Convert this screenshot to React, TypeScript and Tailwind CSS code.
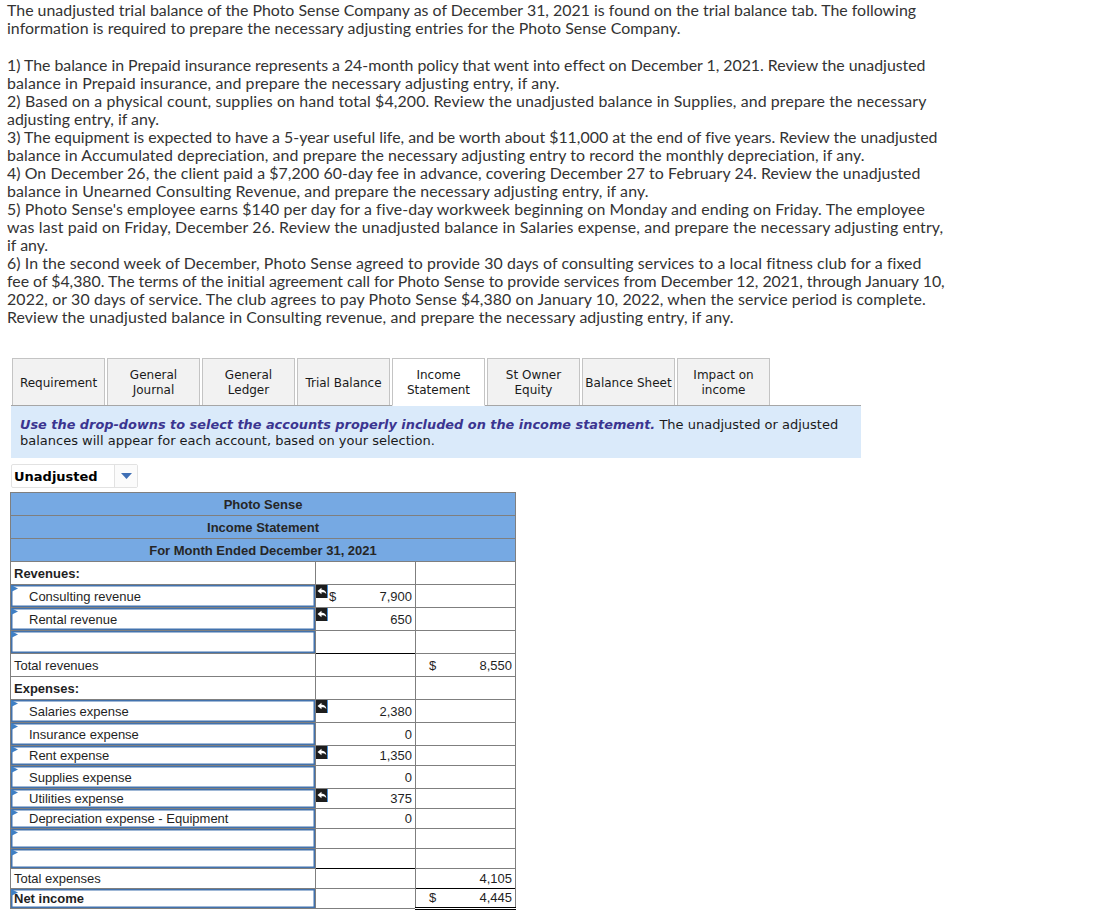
const lines: [string, string][] = [
  ["The unadjusted trial balance of the Photo Sense Company as of December 31, 2021 is found on the trial balance tab. The following", "tracking-[0.01px]"],
  ["information is required to prepare the necessary adjusting entries for the Photo Sense Company.", "tracking-[0.06px]"],
  ["", ""],
  ["1) The balance in Prepaid insurance represents a 24-month policy that went into effect on December 1, 2021. Review the unadjusted", "tracking-[-0.03px]"],
  ["balance in Prepaid insurance, and prepare the necessary adjusting entry, if any.", "tracking-[0.11px]"],
  ["2) Based on a physical count, supplies on hand total $4,200. Review the unadjusted balance in Supplies, and prepare the necessary", "tracking-[0.12px]"],
  ["adjusting entry, if any.", ""],
  ["3) The equipment is expected to have a 5-year useful life, and be worth about $11,000 at the end of five years. Review the unadjusted", ""],
  ["balance in Accumulated depreciation, and prepare the necessary adjusting entry to record the monthly depreciation, if any.", "tracking-[0.08px]"],
  ["4) On December 26, the client paid a $7,200 60-day fee in advance, covering December 27 to February 24. Review the unadjusted", "tracking-[0.065px]"],
  ["balance in Unearned Consulting Revenue, and prepare the necessary adjusting entry, if any.", "tracking-[0.11px]"],
  ["5) Photo Sense's employee earns $140 per day for a five-day workweek beginning on Monday and ending on Friday. The employee", "tracking-[0.1px]"],
  ["was last paid on Friday, December 26. Review the unadjusted balance in Salaries expense, and prepare the necessary adjusting entry,", "tracking-[0.13px]"],
  ["if any.", ""],
  ["6) In the second week of December, Photo Sense agreed to provide 30 days of consulting services to a local fitness club for a fixed", "tracking-[0.085px]"],
  ["fee of $4,380. The terms of the initial agreement call for Photo Sense to provide services from December 12, 2021, through January 10,", "tracking-[-0.02px]"],
  ["2022, or 30 days of service. The club agrees to pay Photo Sense $4,380 on January 10, 2022, when the service period is complete.", "tracking-[0.11px]"],
  ["Review the unadjusted balance in Consulting revenue, and prepare the necessary adjusting entry, if any.", "tracking-[0.09px]"],
];

const tabs: { label: string[]; active?: boolean }[] = [
  { label: ["Requirement"] },
  { label: ["General", "Journal"] },
  { label: ["General", "Ledger"] },
  { label: ["Trial Balance"] },
  { label: ["Income", "Statement"], active: true },
  { label: ["St Owner", "Equity"] },
  { label: ["Balance Sheet"] },
  { label: ["Impact on", "income"] },
];

type Row = {
  h: string;
  short?: boolean;
  label?: string;
  kind: "plain" | "bold" | "select" | "selectBold";
  arrow?: boolean;
  d1?: boolean;
  v1?: string;
  d2?: boolean;
  v2?: string;
  over1?: boolean;
  over2?: boolean;
  dbl2?: boolean;
};

const rows: Row[] = [
  { h: "h-[23px]", label: "Revenues:", kind: "bold" },
  { h: "h-[23px]", label: "Consulting revenue", kind: "select", arrow: true, d1: true, v1: "7,900" },
  { h: "h-[23px]", label: "Rental revenue", kind: "select", arrow: true, v1: "650" },
  { h: "h-[23px]", kind: "select" },
  { h: "h-[23px]", label: "Total revenues", kind: "plain", d2: true, v2: "8,550", over1: true },
  { h: "h-[23px]", label: "Expenses:", kind: "bold" },
  { h: "h-[23px]", label: "Salaries expense", kind: "select", arrow: true, v1: "2,380" },
  { h: "h-[23px]", label: "Insurance expense", kind: "select", v1: "0" },
  { h: "h-[20px]", short: true, label: "Rent expense", kind: "select", arrow: true, v1: "1,350" },
  { h: "h-[23px]", label: "Supplies expense", kind: "select", v1: "0" },
  { h: "h-[20px]", short: true, label: "Utilities expense", kind: "select", arrow: true, v1: "375" },
  { h: "h-[20px]", short: true, label: "Depreciation expense - Equipment", kind: "select", v1: "0" },
  { h: "h-[20px]", short: true, kind: "select" },
  { h: "h-[20px]", short: true, kind: "select" },
  { h: "h-[20px]", short: true, label: "Total expenses", kind: "plain", v2: "4,105", over1: true },
  { h: "h-[20px]", short: true, label: "Net income", kind: "selectBold", d2: true, v2: "4,445", dbl2: true, over2: true },
];

const blackTop = "before:absolute before:-top-px before:inset-x-0 before:h-px before:bg-black ";

function Flag() {
  return (
    <svg width="7" height="8" viewBox="0 0 7 8" className="absolute left-0 top-0">
      <path d="M0 0 L7 3.5 L0 7 Z" fill="#3f7fc4" />
    </svg>
  );
}

function BackArrow() {
  return (
    <span className="absolute left-0 top-0 flex h-[13px] w-[12px] items-center justify-center bg-[#1d1d1d] border-r border-[#4a90d9]">
      <svg width="10" height="9" viewBox="0 0 10 9">
        <path d="M0.5 4 L4.5 0.8 L4.5 2.8 C7 2.8 9 3.8 9.3 7 C8.3 5.6 6.8 5.2 4.5 5.2 L4.5 7.2 Z" fill="#fff" />
      </svg>
    </span>
  );
}

export default function App() {
  return (
    <div className="relative w-[1099px] h-[915px] overflow-hidden bg-white text-[#1a1a1a]">
      <div className="pl-[7px] pt-px font-['Lato',sans-serif] text-[15.9px] leading-[18px] text-[#333333] [font-variant-ligatures:none]">
        {lines.map(([l, track], i) => (
          <div key={i} className={(l ? "h-[18px] " : "h-[19px] ") + "whitespace-nowrap " + track}>
            {l}
          </div>
        ))}
      </div>

      <div className="ml-[11px] mt-[32px] w-[850px] font-['DejaVu_Sans',sans-serif] text-[12px] leading-[15px] text-[#1a1a1a]">
        <div className="flex gap-[2px] pl-px border-b border-[#a6a6a6] h-[48px]">
          {tabs.map((t, i) => (
            <div
              key={i}
              className={
                "flex w-[93px] flex-col items-center justify-center border pt-[2px] border-[#c4c4c4] text-center whitespace-nowrap " +
                (t.active ? "h-[48px] bg-white border-[#a6a6a6] border-b-white" : "h-[47px] border-b-0 bg-[#f2f2f2]")
              }
            >
              {t.label.map((s) => (
                <div key={s}>{s}</div>
              ))}
            </div>
          ))}
        </div>
        <div className="h-[52px] bg-[#daeafa] pl-[9px] pt-[11px] text-[13px] leading-[16px] whitespace-nowrap">
          <div>
            <b className="italic text-[12.88px] text-[#3b3590]">Use the drop-downs to select the accounts properly included on the income statement.</b>{" "}
            The unadjusted or adjusted
          </div>
          <div>balances will appear for each account, based on your selection.</div>
        </div>
        <div className="mt-[6px] flex h-[24px] w-[127px] items-center rounded-[2px] border border-[#e2e2e2] bg-white">
          <div className="flex-1 pl-[2px] pt-px text-[13px] font-bold text-black">Unadjusted</div>
          <div className="flex h-full w-[23px] items-center justify-center border-l border-[#e2e2e2] bg-[#fbfbfb]">
            <svg width="11" height="6" viewBox="0 0 11 6">
              <path d="M0 0 H11 L5.5 6 Z" fill="#3f6fb5" />
            </svg>
          </div>
        </div>
      </div>

      <table className="ml-[10px] mt-[4px] w-[505px] table-fixed border-collapse font-['Liberation_Sans',sans-serif] text-[13px] leading-none text-[#1f1f1f]">
        <colgroup>
          <col className="w-[305px]" />
          <col className="w-[100px]" />
          <col className="w-[100px]" />
        </colgroup>
        <tbody>
          {["Photo Sense", "Income Statement", "For Month Ended December 31, 2021"].map((t) => (
            <tr key={t} className="h-[23px]">
              <td colSpan={3} className="border border-[#7f7f7f] bg-[#76a9e3] pt-px text-center font-bold text-[#262626]">
                {t}
              </td>
            </tr>
          ))}
          {rows.map((r, i) => {
            const sel = r.kind === "select" || r.kind === "selectBold";
            return (
              <tr key={i} className={r.h}>
                <td
                  className={
                    "relative border whitespace-nowrap " +
                    (r.short ? "p-0 " : "pt-px ") +
                    (sel
                      ? "border-[#7f7f7f] pb-0 pl-0 pr-0 shadow-[inset_0_0_0_1.5px_#4272ad] "
                      : "border-[#7f7f7f] pl-[3px] ") +
                    (r.kind === "bold" || r.kind === "selectBold" ? "font-bold " : "")
                  }
                >
                  {sel && <Flag />}
                  <span className={r.kind === "select" ? "pl-[18px]" : r.kind === "selectBold" ? "pl-[3px]" : ""}>
                    {r.label}
                  </span>
                </td>
                <td className={"relative border border-[#7f7f7f] p-0 " + (r.over1 ? blackTop : "")}>
                  {r.arrow && <BackArrow />}
                  <div className="relative flex items-center justify-between pl-[13px] pr-[3px]">
                    <span>{r.d1 ? "$" : ""}</span>
                    <span>{r.v1}</span>
                  </div>
                </td>
                <td
                  className={
                    "relative border border-[#7f7f7f] p-0 " +
                    (r.over2 ? blackTop : "") +
                    (r.dbl2 ? "border-b-[3px] border-b-black border-double" : "")
                  }
                >
                  <div className={"flex items-center justify-between pl-[13px] pr-[3px] " + (r.dbl2 ? "-mt-px" : "")}>
                    <span>{r.d2 ? "$" : ""}</span>
                    <span>{r.v2}</span>
                  </div>
                </td>
              </tr>
            );
          })}
        </tbody>
      </table>
    </div>
  );
}
